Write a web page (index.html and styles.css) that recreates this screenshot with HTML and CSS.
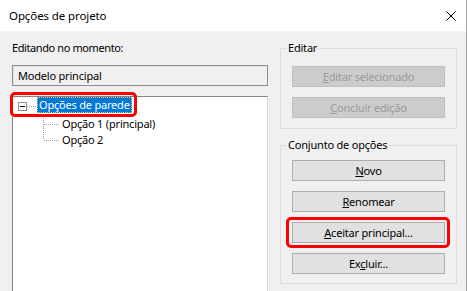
FILE: index.html
```html
<!DOCTYPE html>
<html lang="pt">
<head>
    <meta charset="UTF-8">
    <title>Opções de projeto</title>
    <link rel="stylesheet" href="styles.css">
</head>
<body>
    <div class="window">
        <div class="titlebar">
            <span class="title">Opções de projeto</span>
            <svg class="close" width="10" height="10" viewBox="0 0 10 10">
                <path d="M0.5 0.5 L9.5 9.5 M9.5 0.5 L0.5 9.5" stroke="#000" stroke-width="1" fill="none"/>
            </svg>
        </div>

        <div class="content">
            <div class="left">
                <div class="label">Editando no momento:</div>
                <div class="current">Modelo principal</div>
                <div class="tree">
                    <div class="node root">
                        <svg class="expander" width="24" height="16" viewBox="0 0 24 16">
                            <rect x="5.5" y="5.5" width="8" height="8" fill="#fff" stroke="#919191"/>
                            <path d="M7 9.5 H12" stroke="#000"/>
                            <path d="M14 9.5 H24" stroke="#a0a0a0" stroke-dasharray="1 1"/>
                        </svg>
                        <span class="node-text selected">Opções de parede</span>
                    </div>
                    <div class="children">
                        <div class="node">
                            <svg class="connector" width="17" height="16" viewBox="0 0 17 16">
                                <path d="M0.5 0 V16 M1 8.5 H16" stroke="#a0a0a0" stroke-dasharray="1 1"/>
                            </svg>
                            <span class="node-text">Opção 1 (principal)</span>
                        </div>
                        <div class="node">
                            <svg class="connector" width="17" height="16" viewBox="0 0 17 16">
                                <path d="M0.5 0 V8 M1 8.5 H16" stroke="#a0a0a0" stroke-dasharray="1 1"/>
                            </svg>
                            <span class="node-text">Opção 2</span>
                        </div>
                    </div>
                </div>
            </div>

            <div class="right">
                <fieldset class="group group-edit">
                    <legend>Editar</legend>
                    <button disabled><u>E</u>ditar selecionado</button>
                    <button disabled><u>C</u>oncluir edição</button>
                </fieldset>
                <fieldset class="group group-set">
                    <legend>Conjunto de opções</legend>
                    <button><u>N</u>ovo</button>
                    <button><u>R</u>enomear</button>
                    <button class="marked"><u>A</u>ceitar principal...</button>
                    <button>Ex<u>c</u>luir...</button>
                </fieldset>
            </div>
        </div>
    </div>
</body>
</html>
```

FILE: styles.css
```css
/* Window */
body {
    margin: 0;
    font-family: "Noto Sans", "Open Sans", sans-serif;
    font-size: 11px;
    letter-spacing: -0.2px;
    color: #000000;
    background-color: #f0f0f0;
}

.window {
    width: 466px;
    height: 291px;
    background-color: #f0f0f0;
    border-right: 1px solid #a8a8a8;
    overflow: hidden;
}

.titlebar {
    height: 31px;
    background-color: #ffffff;
    display: flex;
    align-items: center;
    justify-content: space-between;
    padding: 0 10px 0 9px;
}

.title {
    font-size: 11.5px;
    line-height: 16px;
    letter-spacing: -0.1px;
}

.content {
    display: flex;
    gap: 12px;
    padding-left: 12px;
}

/* Left column */
.left {
    width: 256px;
}

.label {
    margin-top: 9px;
    line-height: 16px;
    letter-spacing: -0.4px;
}

.current {
    margin-top: 9px;
    height: 21px;
    box-sizing: border-box;
    line-height: 19px;
    padding-left: 5px;
    border: 1px solid #8c8c8c;
    box-shadow: inset 1px 1px 0 #e3e3e3;
    background-color: #f0f0f0;
}

.tree {
    margin-top: 10px;
    height: 200px;
    background-color: #ffffff;
    border: 1px solid;
    border-color: #828282 #d9d9d9 #d9d9d9 #828282;
}

.node {
    display: flex;
    align-items: center;
    height: 16px;
    line-height: 16px;
}

.root {
    position: relative;
    display: inline-flex;
}

/* red annotation around the selected node */
.root::after {
    content: "";
    position: absolute;
    top: -5px;
    left: -3px;
    right: -5px;
    bottom: -4px;
    border: 3px solid #ff0000;
    border-radius: 5px;
}

.expander {
    display: block;
    flex: none;
}

.node-text {
    padding: 0 2px;
    height: 16px;
    box-sizing: border-box;
}

.selected {
    background-color: #0078d7;
    color: #ffffff;
    outline: 1px dotted #f5c46a;
    outline-offset: -1px;
}

.children {
    margin-left: 30px;
}

.connector {
    display: block;
    flex: none;
}

/* Right column */
.right {
    width: 177px;
    padding-top: 9px;
    display: flex;
    flex-direction: column;
}

.group {
    margin: 0;
    min-width: 0;
    border: 1px solid #dcdcdc;
    display: flex;
    flex-direction: column;
    gap: 10px;
}

.group legend {
    padding: 0 1px;
    margin-left: -5px;
    line-height: 16px;
}

.group-edit {
    padding: 10px 11px 10px 11px;
}

.group-set {
    margin-top: 8px;
    padding: 7px 11px 9px 11px;
}

button {
    height: 21px;
    width: 100%;
    margin: 0;
    padding: 0;
    font-family: inherit;
    font-size: 11px;
    letter-spacing: inherit;
    line-height: 19px;
    color: #000000;
    background-color: #e1e1e1;
    border: 1px solid #adadad;
    border-radius: 0;
}

button:disabled {
    color: #9a9a9a;
    background-color: #cccccc;
    border-color: #bfbfbf;
}

.marked {
    position: relative;
}

/* red annotation around the button */
.marked::after {
    content: "";
    position: absolute;
    top: -6px;
    left: -7px;
    right: -6px;
    bottom: -6px;
    border: 3px solid #ff0000;
    border-radius: 5px;
}
```
